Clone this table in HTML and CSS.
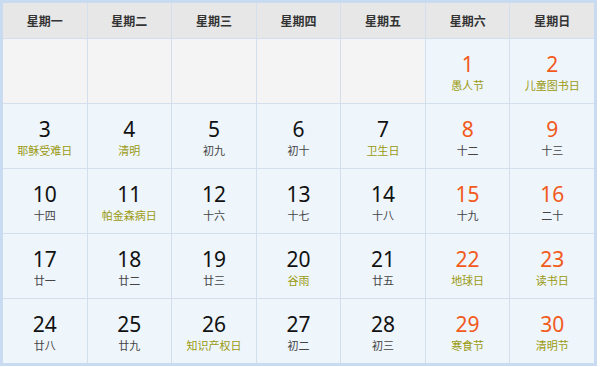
FILE: index.html
```html
<!DOCTYPE html>
<html lang="zh">
<head>
<meta charset="utf-8">
<link rel="stylesheet" href="styles.css">
</head>
<body>
<div class="cal">
  <div class="hd">星期一</div>
  <div class="hd">星期二</div>
  <div class="hd">星期三</div>
  <div class="hd">星期四</div>
  <div class="hd">星期五</div>
  <div class="hd">星期六</div>
  <div class="hd">星期日</div>

  <div class="day empty"></div>
  <div class="day empty"></div>
  <div class="day empty"></div>
  <div class="day empty"></div>
  <div class="day empty"></div>
  <div class="day"><span class="num we">1</span><span class="lb fest">愚人节</span></div>
  <div class="day"><span class="num we">2</span><span class="lb fest">儿童图书日</span></div>

  <div class="day"><span class="num">3</span><span class="lb fest">耶稣受难日</span></div>
  <div class="day"><span class="num">4</span><span class="lb fest">清明</span></div>
  <div class="day"><span class="num">5</span><span class="lb">初九</span></div>
  <div class="day"><span class="num">6</span><span class="lb">初十</span></div>
  <div class="day"><span class="num">7</span><span class="lb fest">卫生日</span></div>
  <div class="day"><span class="num we">8</span><span class="lb">十二</span></div>
  <div class="day"><span class="num we">9</span><span class="lb">十三</span></div>

  <div class="day"><span class="num">10</span><span class="lb">十四</span></div>
  <div class="day"><span class="num">11</span><span class="lb fest">帕金森病日</span></div>
  <div class="day"><span class="num">12</span><span class="lb">十六</span></div>
  <div class="day"><span class="num">13</span><span class="lb">十七</span></div>
  <div class="day"><span class="num">14</span><span class="lb">十八</span></div>
  <div class="day"><span class="num we">15</span><span class="lb">十九</span></div>
  <div class="day"><span class="num we">16</span><span class="lb">二十</span></div>

  <div class="day"><span class="num">17</span><span class="lb">廿一</span></div>
  <div class="day"><span class="num">18</span><span class="lb">廿二</span></div>
  <div class="day"><span class="num">19</span><span class="lb">廿三</span></div>
  <div class="day"><span class="num">20</span><span class="lb fest">谷雨</span></div>
  <div class="day"><span class="num">21</span><span class="lb">廿五</span></div>
  <div class="day"><span class="num we">22</span><span class="lb fest">地球日</span></div>
  <div class="day"><span class="num we">23</span><span class="lb fest">读书日</span></div>

  <div class="day"><span class="num">24</span><span class="lb">廿八</span></div>
  <div class="day"><span class="num">25</span><span class="lb">廿九</span></div>
  <div class="day"><span class="num">26</span><span class="lb fest">知识产权日</span></div>
  <div class="day"><span class="num">27</span><span class="lb">初二</span></div>
  <div class="day"><span class="num">28</span><span class="lb">初三</span></div>
  <div class="day"><span class="num we">29</span><span class="lb fest">寒食节</span></div>
  <div class="day"><span class="num we">30</span><span class="lb fest">清明节</span></div>
</div>
</body>
</html>
```
FILE: styles.css
```css
html, body {
  margin: 0;
  padding: 0;
  background: #ffffff;
}
.cal {
  box-sizing: border-box;
  width: 597px;
  height: 366px;
  border: 3px solid #c8dbf1;
  display: grid;
  grid-template-columns: repeat(7, 1fr);
  grid-template-rows: 35px repeat(5, 64px);
  gap: 1px;
  background: #d3dfec;
  font-family: "Noto Sans CJK SC", "Noto Sans", sans-serif;
}
.hd {
  background: #e7e7e7;
  display: flex;
  align-items: center;
  justify-content: center;
  font-size: 12px;
  font-weight: bold;
  color: #333;
}
.day {
  background: #eef5fb;
  display: flex;
  flex-direction: column;
  align-items: center;
  justify-content: center;
  box-sizing: border-box;
}
.day.empty {
  background: #f4f4f4;
}
.num {
  font-family: "Noto Sans", "Open Sans", sans-serif;
  font-size: 21px;
  line-height: 28px;
  color: #111;
}
.num.we {
  color: #f25a1c;
}
.lb {
  font-size: 11px;
  line-height: 14px;
  color: #444;
}
.lb.fest {
  color: #9a9a0f;
}
```
